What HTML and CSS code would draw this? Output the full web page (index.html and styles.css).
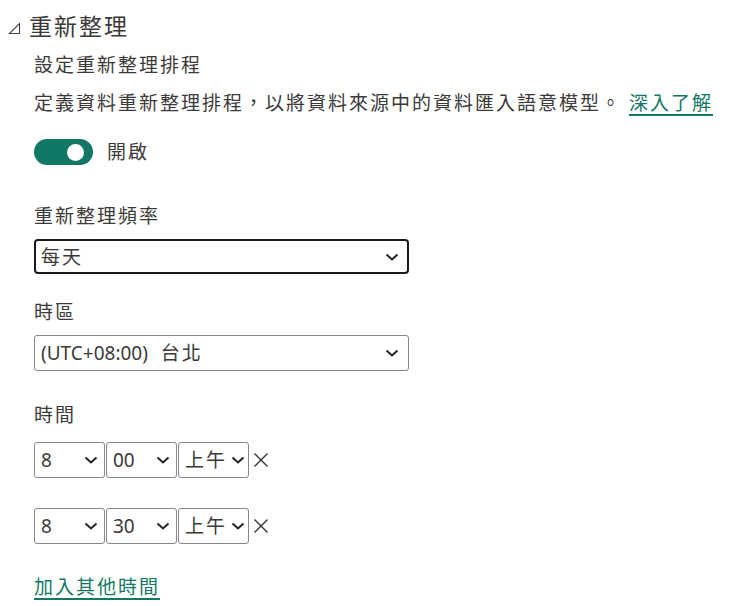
FILE: index.html
```html
<!DOCTYPE html>
<html lang="zh-Hant">
<head>
<meta charset="utf-8">
<link rel="stylesheet" href="styles.css">
</head>
<body>
<div class="panel">
  <div class="title-row">
    <svg class="tri" width="13" height="13" viewBox="0 0 13 13"><path d="M11.5 1.5 L11.5 11.5 L1.5 11.5 Z" fill="none" stroke="#444" stroke-width="1.1" stroke-linejoin="miter"/></svg>
    <h1 class="title">重新整理</h1>
  </div>
  <div class="content">
    <div class="subtitle">設定重新整理排程</div>
    <div class="desc">定義資料重新整理排程，以將資料來源中的資料匯入語意模型。 <a class="link" href="#">深入了解</a></div>
    <div class="toggle-row">
      <span class="toggle"><span class="knob"></span></span>
      <span class="toggle-label">開啟</span>
    </div>

    <div class="label label-freq">重新整理頻率</div>
    <div class="select select-focus">
      <span class="sel-text">每天</span>
      <svg class="chev" width="14" height="8" viewBox="0 0 14 8"><path d="M1.5 1.5 L7 6.5 L12.5 1.5" fill="none" stroke="#252423" stroke-width="2"/></svg>
    </div>

    <div class="label">時區</div>
    <div class="select">
      <span class="sel-text"><span class="latin tz">(UTC+08:00)</span> 台北</span>
      <svg class="chev" width="14" height="8" viewBox="0 0 14 8"><path d="M1.5 1.5 L7 6.5 L12.5 1.5" fill="none" stroke="#252423" stroke-width="2"/></svg>
    </div>

    <div class="label label-time">時間</div>
    <div class="time-row">
      <div class="tsel"><span class="sel-text latin">8</span><svg class="chev" width="14" height="8" viewBox="0 0 14 8"><path d="M1.5 1.5 L7 6.5 L12.5 1.5" fill="none" stroke="#252423" stroke-width="2"/></svg></div>
      <div class="tsel"><span class="sel-text latin">00</span><svg class="chev" width="14" height="8" viewBox="0 0 14 8"><path d="M1.5 1.5 L7 6.5 L12.5 1.5" fill="none" stroke="#252423" stroke-width="2"/></svg></div>
      <div class="tsel tsel-ampm"><span class="sel-text">上午</span><svg class="chev" width="14" height="8" viewBox="0 0 14 8"><path d="M1.5 1.5 L7 6.5 L12.5 1.5" fill="none" stroke="#252423" stroke-width="2"/></svg></div>
      <svg class="close" width="16" height="16" viewBox="0 0 16 16"><path d="M1.5 1.5 L14.5 14.5 M14.5 1.5 L1.5 14.5" stroke="#323130" stroke-width="1.4"/></svg>
    </div>
    <div class="time-row">
      <div class="tsel"><span class="sel-text latin">8</span><svg class="chev" width="14" height="8" viewBox="0 0 14 8"><path d="M1.5 1.5 L7 6.5 L12.5 1.5" fill="none" stroke="#252423" stroke-width="2"/></svg></div>
      <div class="tsel"><span class="sel-text latin">30</span><svg class="chev" width="14" height="8" viewBox="0 0 14 8"><path d="M1.5 1.5 L7 6.5 L12.5 1.5" fill="none" stroke="#252423" stroke-width="2"/></svg></div>
      <div class="tsel tsel-ampm"><span class="sel-text">上午</span><svg class="chev" width="14" height="8" viewBox="0 0 14 8"><path d="M1.5 1.5 L7 6.5 L12.5 1.5" fill="none" stroke="#252423" stroke-width="2"/></svg></div>
      <svg class="close" width="16" height="16" viewBox="0 0 16 16"><path d="M1.5 1.5 L14.5 14.5 M14.5 1.5 L1.5 14.5" stroke="#323130" stroke-width="1.4"/></svg>
    </div>

    <a class="link add-link" href="#">加入其他時間</a>
  </div>
</div>
</body>
</html>
```

FILE: styles.css
```css
* { box-sizing: border-box; }
html, body { margin: 0; padding: 0; background: #fff; }
body {
  font-family: "Noto Sans", "Noto Sans CJK TC", sans-serif;
  color: #3b3a39;
  width: 733px;
  height: 606px;
  overflow: hidden;
}
.panel { padding-top: 9px; }
.title-row {
  display: flex;
  align-items: center;
  padding-left: 8px;
  height: 34px;
}
.tri { margin-top: 5px; margin-right: 8px; }
.title {
  margin: 0;
  font-size: 23px;
  font-weight: 400;
  letter-spacing: 2px;
  line-height: 34px;
  color: #3b3a39;
}
.content { padding-left: 34px; font-size: 19px; letter-spacing: 2px; }
.latin { letter-spacing: 0; }
.tz { margin-right: 6px; }
.subtitle { margin-top: 7px; line-height: 30px; }
.desc { margin-top: 8px; line-height: 30px; white-space: nowrap; }
.link {
  color: #117865;
  text-decoration: underline;
  text-decoration-thickness: 2px;
  text-underline-offset: 4px;
}
.toggle-row {
  display: flex;
  align-items: center;
  margin-top: 21px;
  height: 26px;
}
.toggle {
  width: 59px;
  height: 26px;
  border-radius: 13px;
  background: #117865;
  display: flex;
  align-items: center;
  justify-content: flex-end;
  padding-right: 9px;
}
.knob {
  width: 17px;
  height: 17px;
  border-radius: 50%;
  background: #fff;
}
.toggle-label { margin-left: 14px; line-height: 26px; }
.label { margin-top: 23px; line-height: 30px; }
.label-freq { margin-top: 36px; }
.label-time { margin-top: 29px; }
.select {
  margin-top: 8px;
  width: 375px;
  height: 36px;
  border: 1px solid #8a8886;
  border-radius: 3px;
  display: flex;
  align-items: center;
  justify-content: space-between;
  padding: 0 9px 0 6px;
}
.select-focus { border: 2px solid #1b1a19; border-radius: 4px; padding-left: 5px; padding-right: 8px; height: 35px; }
.sel-text { line-height: 30px; white-space: nowrap; }
.chev { flex: none; }
.time-row {
  display: flex;
  align-items: center;
  gap: 1px;
  margin-top: 12px;
}
.time-row + .time-row { margin-top: 30px; }
.tsel {
  width: 71px;
  height: 36px;
  border: 1px solid #8a8886;
  border-radius: 3px;
  display: flex;
  align-items: center;
  justify-content: space-between;
  padding: 0 6px 0 6px;
}
.tsel-ampm { padding-right: 3px; }
.close { margin-left: 3px; }
.add-link { display: inline-block; margin-top: 28px; line-height: 30px; }
```
